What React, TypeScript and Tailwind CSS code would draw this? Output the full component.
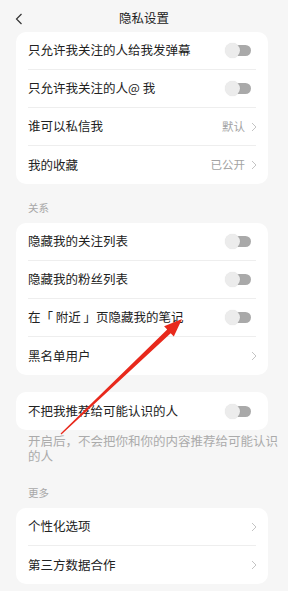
import React from "react";

const FONT = { fontFamily: '"Noto Sans CJK SC", "Noto Sans", sans-serif' };

function Toggle() {
  return (
    <div className="relative w-[26px] h-[16px] flex items-center">
      <div className="absolute right-0 w-[20px] h-[11px] rounded-full bg-[#a9a9a9]" />
      <div className="absolute left-0 w-[15px] h-[15px] rounded-full bg-[#ececec] shadow-[0_0_1px_rgba(0,0,0,0.15)]" />
    </div>
  );
}

function Chevron() {
  return (
    <svg width="6" height="10" viewBox="0 0 6 10" className="ml-[6px]" aria-hidden="true">
      <path d="M1 1l4 4-4 4" fill="none" stroke="#c4c4c4" strokeWidth="1" />
    </svg>
  );
}

type Row = { label: string; toggle?: boolean; value?: string };

function Card({ rows }: { rows: Row[] }) {
  return (
    <div className="mx-[16px] w-[252px] bg-white rounded-[10px]">
      {rows.map((r, i) => (
        <div key={r.label} className="px-[12px]">
          <div
            className={`h-[38px] flex items-center justify-between ${
              i < rows.length - 1 ? "border-b border-[#eeeeee]" : ""
            }`}
          >
            <span className="text-[12.5px] text-[#222222]">{r.label}</span>
            {r.toggle ? (
              <div className="mr-[5px]">
                <Toggle />
              </div>
            ) : (
              <div className="flex items-center mr-[-1px]">
                {r.value && <span className="text-[11.5px] text-[#a3a3a3]">{r.value}</span>}
                <Chevron />
              </div>
            )}
          </div>
        </div>
      ))}
    </div>
  );
}

function SectionLabel({ text, top }: { text: string; top: string }) {
  return (
    <div className={`px-[28px] ${top} pb-[8px] text-[10.5px] leading-[15px] text-[#a8a8a8]`}>{text}</div>
  );
}

export default function App() {
  return (
    <div className="relative w-[288px] h-[591px] overflow-hidden bg-[#f6f6f6]" style={FONT}>
      {/* Header */}
      <div className="relative h-[32px] flex items-center justify-center">
        <svg width="8" height="12" viewBox="0 0 8 12" className="absolute left-[15px] top-[13px]" aria-hidden="true">
          <path d="M6.5 1L1.5 6l5 5" fill="none" stroke="#333333" strokeWidth="1.2" />
        </svg>
        <span className="text-[12.5px] text-[#222222] mt-[4px]">隐私设置</span>
      </div>

      <Card
        rows={[
          { label: "只允许我关注的人给我发弹幕", toggle: true },
          { label: "只允许我关注的人@ 我", toggle: true },
          { label: "谁可以私信我", value: "默认" },
          { label: "我的收藏", value: "已公开" },
        ]}
      />

      <SectionLabel text="关系" top="pt-[16px]" />

      <Card
        rows={[
          { label: "隐藏我的关注列表", toggle: true },
          { label: "隐藏我的粉丝列表", toggle: true },
          { label: "在「 附近 」页隐藏我的笔记", toggle: true },
          { label: "黑名单用户" },
        ]}
      />

      <div className="h-[17px]" />

      <Card rows={[{ label: "不把我推荐给可能认识的人", toggle: true }]} />

      <div className="pl-[28px] pr-[8px] pt-[3px] text-[12.5px] leading-[15px] text-[#ababab]">
        开启后，不会把你和你的内容推荐给可能认识的人
      </div>

      <SectionLabel text="更多" top="pt-[22px]" />

      <Card rows={[{ label: "个性化选项" }, { label: "第三方数据合作" }]} />

      {/* Red annotation arrow */}
      <svg className="absolute left-0 top-0 pointer-events-none" width="288" height="591" aria-hidden="true">
        <polygon
          points="60.6,433.6 167.2,329.6 164.1,326.3 182,319 173.8,336.5 170.7,333.2 61.4,434.4"
          fill="#e8291c"
        />
      </svg>
    </div>
  );
}
